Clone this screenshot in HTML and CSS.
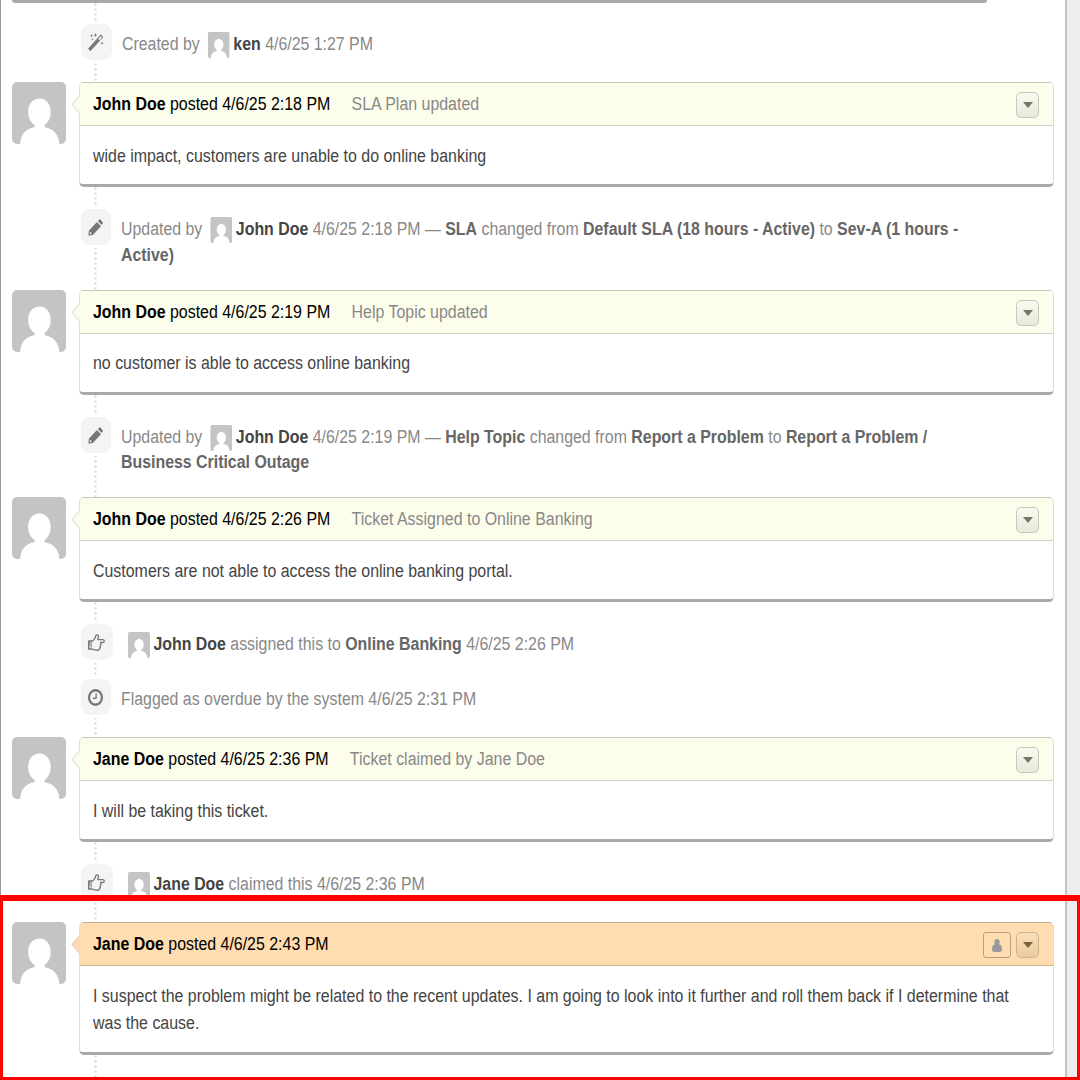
FILE: index.html
```html
<!DOCTYPE html>
<html lang="en">
<head>
<meta charset="utf-8">
<title>Ticket thread</title>
<link rel="stylesheet" href="styles.css">
</head>
<body>
<svg class="defs" aria-hidden="true">
  <symbol id="avatar" viewBox="0 0 53 62" preserveAspectRatio="none">
    <rect width="53" height="62" rx="5" fill="#c4c4c4"/>
    <path fill="#fff" d="M27 16.500c-6.500 0-11.200 5.700-11.200 13.500 0 5.600 2.600 10.500 6.400 13v2C13.500 47 8.500 52 8 62h38.500C46 52 40.500 47 32 45v-2c3.600-2.600 6-7.400 6-13 0-7.800-4.600-13.500-11-13.500z"/>
  </symbol>
  <symbol id="pencil" viewBox="0 0 15 17" preserveAspectRatio="none">
    <path fill-rule="evenodd" d="M.3 16.500 1 11.600 9 2.900l4 4.300-8.200 8.700zM1.600 15.200l2.300-.5-1.700-1.900zM9.900 2l1.300-1.400q.6-.6 1.200 0l2.200 2.600q.5.600 0 1.300L13.500 6z"/>
  </symbol>
  <symbol id="clock" viewBox="128 128 1536 1536" preserveAspectRatio="none">
    <path d="M1024 544v448q0 14-9 23t-23 9h-320q-14 0-23-9t-9-23v-64q0-14 9-23t23-9h224v-352q0-14 9-23t23-9h64q14 0 23 9t9 23zm416 352q0-148-73-273t-198-198-273-73-273 73-198 198-73 273 73 273 198 198 273 73 273-73 198-198 73-273zm224 0q0 209-103 385.500t-279.500 279.500-385.500 103-385.500-103-279.500-279.500-103-385.500 103-385.500 279.500-279.500 385.500-103 385.500 103 279.500 279.500 103 385.500z"/>
  </symbol>
  <symbol id="wand" viewBox="0 0 16 18" preserveAspectRatio="none">
    <path d="M.5 15.200 12.300 2 Q13 1.200 13.700 2l1 1.200q.6.800 0 1.500L3 17.600q-.7.600-1.300 0l-1.200-1.300q-.5-.5 0-1.100zM10.300 6l1.200 1.400L14 4.300 12.900 3z" fill-rule="evenodd"/>
    <path d="M3.500 1l.4 1.300 1.300.5-1.300.5-.4 1.400-.4-1.400-1.300-.5 1.300-.5zM7.500 0l.5 1.500 1.400.6-1.400.6-.5 1.500L7 2.700l-1.400-.6L7 1.500zM14 8.500l.4 1.300 1.300.5-1.300.4-.4 1.400-.4-1.400-1.300-.4 1.300-.5zM4.500 5l.3 1 1 .4-1 .3-.3 1.100-.3-1.100-1-.3 1-.4z"/>
  </symbol>
  <symbol id="hand" viewBox="0 0 17 17" preserveAspectRatio="none">
    <path fill="none" stroke="currentColor" stroke-width="1.300" stroke-linejoin="round" d="M.7 7h3.800C6 6.500 6.600 5.200 7.200 3.600 7.700 2 7.800.8 8.900.8c1.300 0 1.700 1.300 1.400 2.700L9.800 5.600h5c.9 0 1.500.6 1.500 1.400s-.6 1.500-1.500 1.500h-2.300c.8.500.8 2-.2 2.500.6.700.3 2-.5 2.400.3.800 0 1.700-.8 2.100-.9.900-2.300 1-3.700.7-1-.2-1.700-1-2.900-1H.7z"/>
    <path d="M.7 7h3.400v8.200H.7z" opacity=".55"/><circle cx="2.400" cy="13.300" r=".8" fill="#f4f4f4"/>
  </symbol>
  <symbol id="user" viewBox="0 0 10 13" preserveAspectRatio="none">
    <path d="M5 0c1.700 0 2.700 1.200 2.700 3 0 1-.3 1.800-.8 2.300C9 5.700 10 7.500 10 10.200 10 12 9 13 7.500 13h-5C1 13 0 12 0 10.200 0 7.500 1 5.700 3.100 5.300 2.600 4.800 2.300 4 2.300 3c0-1.800 1-3 2.700-3z"/>
  </symbol>
</svg>

<main class="thread">
  <div class="card-end"></div>

  <div class="events first">
    <div class="event">
      <span class="badge wide-1"><svg class="icon wand"><use href="#wand"/></svg></span>
      <p class="line">Created by <svg class="mini"><use href="#avatar"/></svg><b class="who">ken</b> 4/6/25 1:27 PM</p>
    </div>
  </div>

  <article class="entry">
    <svg class="avatar"><use href="#avatar"/></svg>
    <div class="card">
      <header class="head"><p class="line"><b>John Doe</b> posted 4/6/25 2:18 PM<span class="note">SLA Plan updated</span></p><div class="tools"><span class="btn"></span></div></header>
      <p class="line body">wide impact, customers are unable to do online banking</p>
    </div>
  </article>

  <div class="events tall">
    <div class="event">
      <span class="badge"><svg class="icon pencil"><use href="#pencil"/></svg></span>
      <p class="line">Updated by <svg class="mini"><use href="#avatar"/></svg><b class="who">John Doe</b> 4/6/25 2:18 PM — <b>SLA</b> changed from <b>Default SLA (18 hours - Active)</b> to <b>Sev-A (1 hours -<br>Active)</b></p>
    </div>
  </div>

  <article class="entry">
    <svg class="avatar"><use href="#avatar"/></svg>
    <div class="card">
      <header class="head"><p class="line"><b>John Doe</b> posted 4/6/25 2:19 PM<span class="note">Help Topic updated</span></p><div class="tools"><span class="btn"></span></div></header>
      <p class="line body high">no customer is able to access online banking</p>
    </div>
  </article>

  <div class="events tall second">
    <div class="event">
      <span class="badge"><svg class="icon pencil"><use href="#pencil"/></svg></span>
      <p class="line">Updated by <svg class="mini"><use href="#avatar"/></svg><b class="who">John Doe</b> 4/6/25 2:19 PM — <b>Help Topic</b> changed from <b>Report a Problem</b> to <b>Report a Problem /<br>Business Critical Outage</b></p>
    </div>
  </div>

  <article class="entry">
    <svg class="avatar"><use href="#avatar"/></svg>
    <div class="card">
      <header class="head"><p class="line"><b>John Doe</b> posted 4/6/25 2:26 PM<span class="note">Ticket Assigned to Online Banking</span></p><div class="tools"><span class="btn"></span></div></header>
      <p class="line body">Customers are not able to access the online banking portal.</p>
    </div>
  </article>

  <div class="events pair">
    <div class="event">
      <span class="badge wide-2"><svg class="icon hand"><use href="#hand"/></svg></span>
      <p class="line lead"><svg class="mini"><use href="#avatar"/></svg><b class="who">John Doe</b> assigned this to <b>Online Banking</b> 4/6/25 2:26 PM</p>
    </div>
    <div class="event">
      <span class="badge"><svg class="icon clock"><use href="#clock"/></svg></span>
      <p class="line">Flagged as overdue by the system 4/6/25 2:31 PM</p>
    </div>
  </div>

  <article class="entry">
    <svg class="avatar"><use href="#avatar"/></svg>
    <div class="card">
      <header class="head"><p class="line"><b>Jane Doe</b> posted 4/6/25 2:36 PM<span class="note">Ticket claimed by Jane Doe</span></p><div class="tools"><span class="btn"></span></div></header>
      <p class="line body">I will be taking this ticket.</p>
    </div>
  </article>

  <div class="events short">
    <div class="event">
      <span class="badge wide-2"><svg class="icon hand"><use href="#hand"/></svg></span>
      <p class="line lead"><svg class="mini"><use href="#avatar"/></svg><b class="who">Jane Doe</b> claimed this 4/6/25 2:36 PM</p>
    </div>
  </div>

  <article class="entry response">
    <svg class="avatar"><use href="#avatar"/></svg>
    <div class="card">
      <header class="head"><p class="line"><b>Jane Doe</b> posted 4/6/25 2:43 PM</p><div class="tools"><span class="tag"><svg class="icon user"><use href="#user"/></svg></span><span class="btn"></span></div></header>
      <p class="line body">I suspect the problem might be related to the recent updates. I am going to look into it further and roll them back if I determine that<br>was the cause.</p>
    </div>
  </article>
  <div class="events tail"></div>
</main>
<div class="highlight"></div>
</body>
</html>
```
FILE: styles.css
```css
* { box-sizing: border-box; }
body {
  margin: 0;
  width: 1080px;
  height: 1080px;
  overflow: hidden;
  position: relative;
  background: #ededed;
  font-family: "Liberation Sans", Arial, sans-serif;
  font-size: 18px;
}
p { margin: 0; }
.defs { position: absolute; width: 0; height: 0; }

.thread {
  width: 1067px;
  height: 1080px;
  background: #fff;
  border-left: 1px solid #999;
  border-right: 2px solid #c4c4c4;
  overflow: hidden;
}
.card-end {
  width: 975px;
  height: 3px;
  margin-left: 11px;
  background: #aaa;
  border-radius: 0 0 5px 5px;
}

.line {
  white-space: nowrap;
  transform: scaleX(0.885);
  transform-origin: 0 0;
}

/* events between the posts, joined by a dotted line */
.events {
  background: radial-gradient(circle, #dedede 0.900px, transparent 1.500px) 93px 4px / 3px 5px repeat-y;
  padding-left: 80px;
  overflow: hidden;
}
.events.first { height: 79px; padding-top: 21px; }
.events.tall { height: 103px; padding-top: 22px; }
.events.second { height: 102px; }
.events.pair { height: 135px; padding-top: 22px; display: flex; flex-direction: column; gap: 18px; }
.events.short { height: 80px; padding-top: 22px; }
.events.tail { height: 25px; }
.event { display: flex; height: 37px; gap: 10px; color: #888; }
.event .line { line-height: 25.500px; padding-top: 8px; flex: 1; transform: scaleX(0.883); }
.second .line { line-height: 25px; }
.event .line.lead { margin-left: 4px; }
.event .line b { color: #666; }
.event .line b.who { color: #444; }

.badge {
  width: 30px;
  height: 36px;
  flex: none;
  background: #f4f4f4;
  border-radius: 9px;
  box-shadow: 0 0 0 3px #fff;
  display: flex;
  align-items: center;
  justify-content: center;
  padding-right: 1px;
  color: #777;
}
.wide-1 { width: 31px; }
.wide-2 { width: 32px; }
.icon { fill: currentColor; overflow: visible; }
.wand { width: 16px; height: 18px; }
.pencil { width: 15px; height: 17px; }
.clock { width: 15px; height: 17px; }
.hand { width: 17px; height: 17px; }
.user { width: 10px; height: 13px; color: #999; }
.mini { width: 25px; height: 26px; vertical-align: 2px; margin: -10px 4px -10px 4px; }
.lead .mini { margin-left: 1px; }

/* posts */
.entry { display: flex; padding-left: 11px; height: 105px; }
.response { height: 133px; }
.avatar { width: 54px; height: 62px; flex: none; }
.card {
  position: relative;
  margin-left: 13px;
  width: 975px;
  border: 1px solid #ddd;
  border-top-color: #c8c8b8;
  border-bottom: 3px solid #aaa;
  border-radius: 5px;
  background: #fff;
}
.card::before {
  content: "";
  position: absolute;
  left: -6px;
  top: 15px;
  width: 12px;
  height: 12px;
  background: #fdfdec;
  border: 1px solid #ddd;
  border-width: 0 0 1px 1px;
  transform: scaleY(1.150) rotate(45deg);
}
.head {
  position: relative;
  display: flex;
  justify-content: space-between;
  align-items: center;
  height: 43px;
  padding: 0 14px 0 13px;
  background: #fdfdec;
  border-bottom: 1px solid #d0d0c4;
  border-radius: 4px 4px 0 0;
  color: #000;
}
.note { color: #888; margin-left: 24px; }
.body { padding: 17px 0 0 13px; line-height: 27px; color: #444; transform-origin: 13px 0; }
.body.high { padding-top: 16px; }
.response .body { transform: scaleX(0.886); }
.response .head { background: #ffddb0; border-color: #cdb38c; }
.response .card { border-top-color: #c4ac8c; }
.response .card::before { background: #ffd8b4; border-color: #f0d4b8; }

.tools { display: flex; gap: 5px; padding-top: 2px; }
.btn {
  width: 23px;
  height: 26px;
  border: 1px solid #c8c8bb;
  border-radius: 5px;
  background: linear-gradient(#fafaf0, #e8e8dc);
  display: flex;
  align-items: center;
  justify-content: center;
}
.btn::before {
  content: "";
  border: 5px solid transparent;
  border-top: 6px solid #777766;
  border-bottom: 0;
}
.response .btn { border-color: #cdb38c; background: linear-gradient(#fbdfb8, #e8cba0); }
.response .btn::before { border-top-color: #77603c; }
.tag {
  width: 28px;
  height: 26px;
  border: 1px solid #b79f7e;
  border-radius: 3px;
  display: flex;
  align-items: center;
  justify-content: center;
}

.highlight {
  position: absolute;
  left: 0;
  top: 895px;
  width: 1080px;
  height: 185px;
  border: solid #f00;
  border-width: 6px 3px 3px 3px;
}
```
